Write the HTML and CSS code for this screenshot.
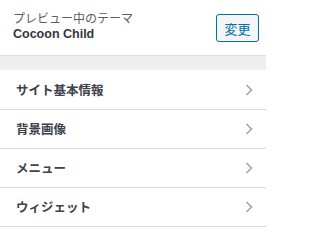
FILE: index.html
```html
<!DOCTYPE html>
<html lang="ja">
<head>
<meta charset="utf-8">
<link rel="stylesheet" href="styles.css">
</head>
<body>
<div class="panel">
  <div class="header">
    <div class="theme-info">
      <div class="notice">プレビュー中のテーマ</div>
      <div class="theme-name">Cocoon Child</div>
    </div>
    <button class="change-btn">変更</button>
  </div>
  <div class="spacer"></div>
  <ul class="sections">
    <li class="section"><span class="title">サイト基本情報</span><svg class="chev" width="8" height="12" viewBox="0 0 8 12"><polyline points="1.5,1 6.5,6 1.5,11" fill="none" stroke="#a0a5aa" stroke-width="1.6"/></svg></li>
    <li class="section"><span class="title">背景画像</span><svg class="chev" width="8" height="12" viewBox="0 0 8 12"><polyline points="1.5,1 6.5,6 1.5,11" fill="none" stroke="#a0a5aa" stroke-width="1.6"/></svg></li>
    <li class="section"><span class="title">メニュー</span><svg class="chev" width="8" height="12" viewBox="0 0 8 12"><polyline points="1.5,1 6.5,6 1.5,11" fill="none" stroke="#a0a5aa" stroke-width="1.6"/></svg></li>
    <li class="section"><span class="title">ウィジェット</span><svg class="chev" width="8" height="12" viewBox="0 0 8 12"><polyline points="1.5,1 6.5,6 1.5,11" fill="none" stroke="#a0a5aa" stroke-width="1.6"/></svg></li>
  </ul>
</div>
</body>
</html>
```

FILE: styles.css
```css
html, body {
  margin: 0;
  padding: 0;
  background: #fff;
}
body {
  font-family: "Liberation Sans", "Noto Sans CJK JP", sans-serif;
  color: #32373c;
}
.panel {
  width: 266px;
}
.header {
  height: 55px;
  border-bottom: 1px solid #dcdcde;
  display: flex;
  align-items: flex-start;
  justify-content: space-between;
  padding: 0 7px 0 13px;
  box-sizing: content-box;
  background: #fff;
}
.theme-info {
  padding-top: 11px;
}
.notice {
  font-size: 12px;
  line-height: 16px;
  color: #555d66;
}
.theme-name {
  font-size: 12.5px;
  font-weight: bold;
  line-height: 15px;
  color: #32373c;
}
.change-btn {
  margin-top: 14px;
  width: 43px;
  height: 28px;
  border: 1px solid #0071a1;
  border-radius: 3px;
  background: #f3f5f6;
  color: #0071a1;
  font-family: "Noto Sans CJK JP", sans-serif;
  font-size: 13px;
  line-height: 1;
  padding: 0;
}
.spacer {
  height: 14px;
  background: #eeeeee;
}
.sections {
  list-style: none;
  margin: 0;
  padding: 0;
}
.section {
  height: 38px;
  border-bottom: 1px solid #dcdcde;
  display: flex;
  align-items: center;
  justify-content: space-between;
  padding: 0 13px 0 16px;
}
.section:first-child {
  border-top: 1px solid #fff;
}
.title {
  font-family: "Noto Sans CJK JP", sans-serif;
  font-size: 12.5px;
  font-weight: bold;
  color: #3c434a;
  line-height: 16px;
}
.chev {
  display: block;
}
```
